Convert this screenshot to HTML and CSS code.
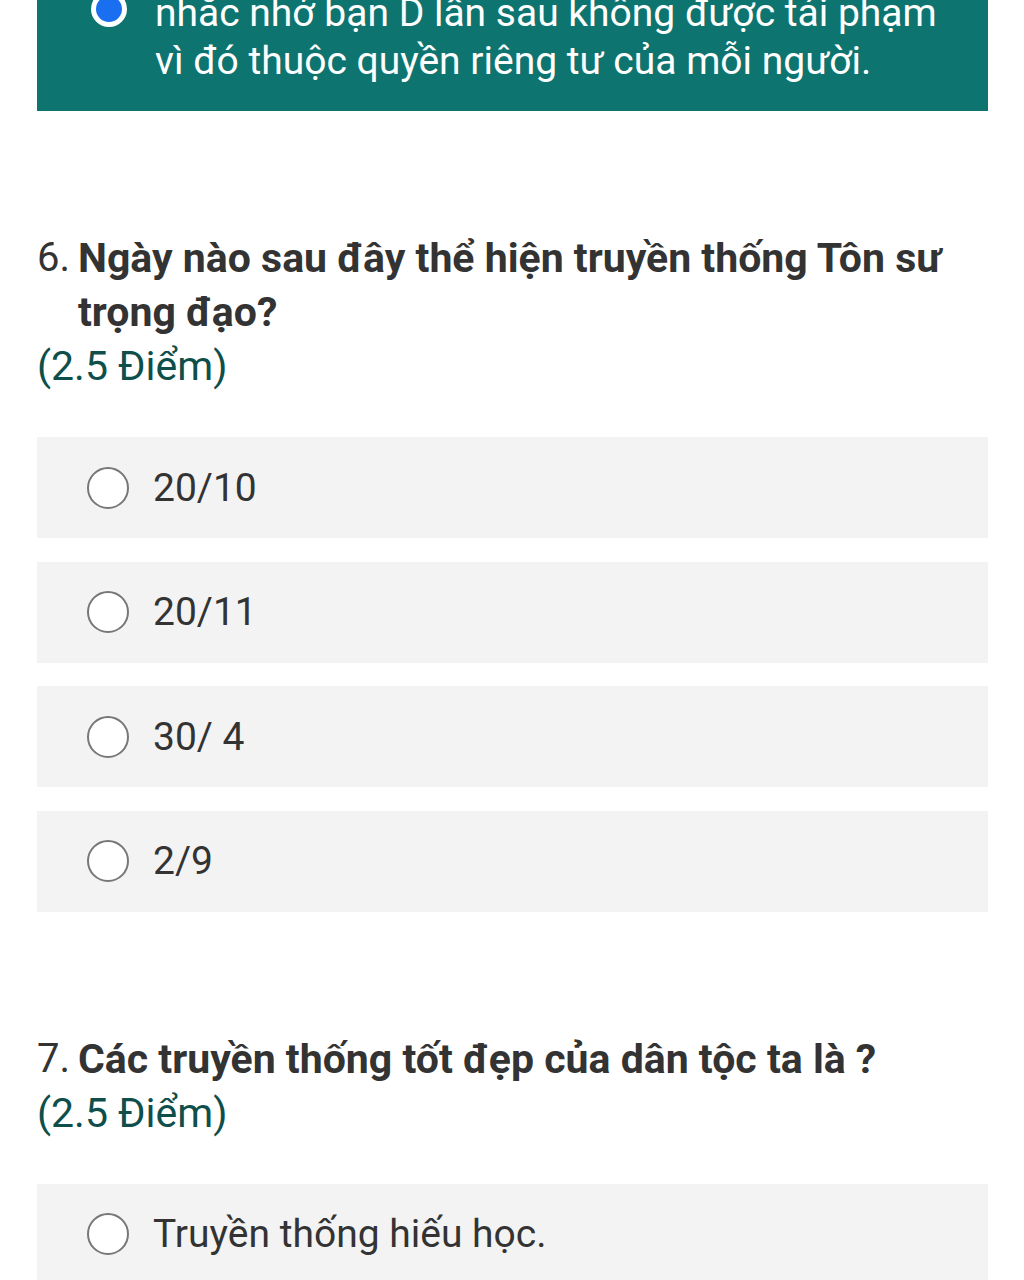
FILE: index.html
```html
<!DOCTYPE html>
<html lang="vi">
<head>
<meta charset="utf-8">
<title>Bài kiểm tra</title>
<link rel="stylesheet" href="styles.css">
</head>
<body>
<main class="page">
  <div class="choice choice-selected">
    <span class="radio radio-on"></span>
    <span class="choice-text">nhắc nhở bạn D lần sau không được tái phạm<br>vì đó thuộc quyền riêng tư của mỗi người.</span>
  </div>

  <section class="question">
    <div class="q-title">
      <span class="q-num">6.</span>
      <span class="q-text">Ngày nào sau đây thể hiện truyền thống Tôn sư trọng đạo?</span>
    </div>
    <div class="q-points">(2.5 Điểm)</div>
    <div class="choices">
      <div class="choice"><span class="radio"></span><span class="choice-text">20/10</span></div>
      <div class="choice"><span class="radio"></span><span class="choice-text">20/11</span></div>
      <div class="choice"><span class="radio"></span><span class="choice-text">30/ 4</span></div>
      <div class="choice"><span class="radio"></span><span class="choice-text">2/9</span></div>
    </div>
  </section>

  <section class="question">
    <div class="q-title">
      <span class="q-num">7.</span>
      <span class="q-text">Các truyền thống tốt đẹp của dân tộc ta là ?</span>
    </div>
    <div class="q-points">(2.5 Điểm)</div>
    <div class="choices">
      <div class="choice"><span class="radio"></span><span class="choice-text">Truyền thống hiếu học.</span></div>
    </div>
  </section>
</main>
</body>
</html>
```

FILE: styles.css
```css
html, body {
  margin: 0;
  padding: 0;
  background: #ffffff;
}

body {
  font-family: Roboto, "Noto Sans", "Liberation Sans", sans-serif;
  color: #333333;
}

.page {
  padding: 0 36px 0 37px;
}

.choices {
  display: flex;
  flex-direction: column;
  gap: 23.5px;
}

.choice {
  display: flex;
  align-items: center;
  min-height: 101px;
  background: #f3f3f3;
  padding-left: 50px;
}

.choice-text {
  font-size: 39px;
  line-height: 48px;
  color: #333333;
}

.radio {
  flex: none;
  width: 38px;
  height: 38px;
  border: 2.5px solid #777777;
  border-radius: 50%;
  background: #ffffff;
  margin-right: 24px;
}

.choice-selected {
  align-items: flex-start;
  min-height: 0;
  background: #0e7470;
  margin-top: -11px;
  padding: 0 0 26px 54px;
}

.choice-selected .choice-text {
  color: #ffffff;
}

.radio-on {
  width: 26px;
  height: 26px;
  border: 5px solid #ffffff;
  background: #1a6ff0;
  margin-top: 2px;
  margin-right: 28px;
}

.question {
  padding-top: 120px;
}

.q-title {
  display: flex;
  font-size: 40px;
  line-height: 54px;
  color: #333333;
}

.q-num {
  flex: none;
  width: 41px;
}

.q-text {
  font-weight: 700;
  font-size: 41px;
}

.q-points {
  font-size: 41px;
  line-height: 54px;
  color: #0e4f4b;
  margin-bottom: 44px;
}
```
